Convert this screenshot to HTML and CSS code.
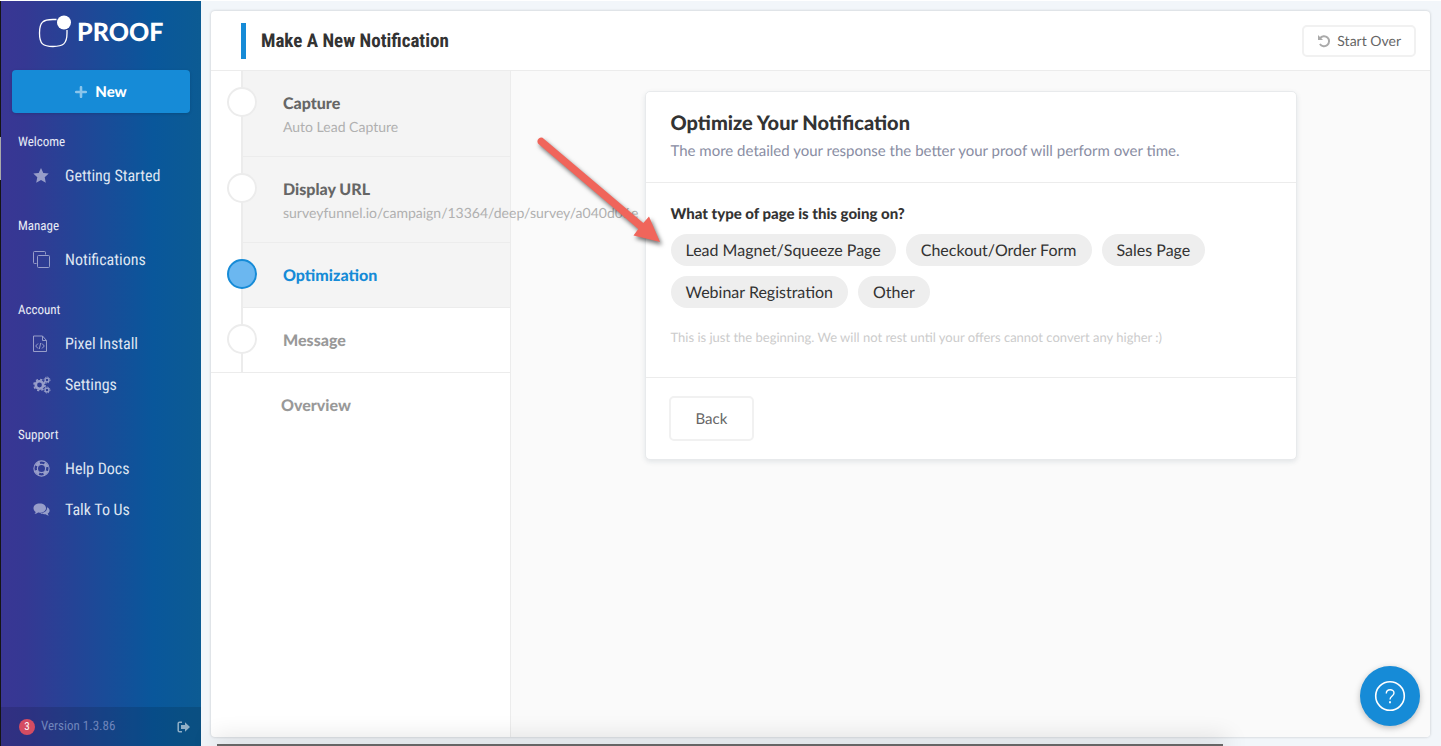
FILE: index.html
```html
<!DOCTYPE html>
<html lang="en">
<head>
<meta charset="utf-8">
<title>Proof - Make A New Notification</title>
<link rel="stylesheet" href="styles.css">
</head>
<body>
<aside class="sidebar">
  <a class="logo" href="#">
    <svg class="logo-mark" width="34" height="34" viewBox="0 0 34 34"><path d="M18.500 4.500H15C5 4.500 1.500 7 1.500 18S5 31.500 15 31.500 29 29 29 18V15" fill="none" stroke="#fff" stroke-width="1.300"/><circle cx="26" cy="7.500" r="7" fill="#fff"/></svg>
    <span>PROOF</span>
  </a>
  <button class="new-button" type="button">
    <svg width="12" height="12" viewBox="0 0 12 12"><path d="M6 1.200v9.600M1.200 6h9.600" stroke="#fff" stroke-width="2.600" stroke-linecap="round"/></svg>
    New
  </button>
  <nav class="nav">
    <h2>Welcome</h2>
    <a href="#"><svg width="18" height="18" viewBox="0 0 18 18"><path d="M8 1l2.300 5 5.400.6-4 3.700 1.100 5.500L8 13l-4.800 2.800 1.100-5.500-4-3.700 5.400-.6z" fill="#fff"/></svg>Getting Started</a>
    <h2>Manage</h2>
    <a href="#"><svg width="18" height="18" viewBox="0 0 18 18" fill="none" stroke="#fff"><path d="M3.500 12.500h-2a1 1 0 0 1-1-1v-10a1 1 0 0 1 1-1h10a1 1 0 0 1 1 1v2"/><rect x="4.500" y="4.500" width="12" height="12" rx="1"/></svg>Notifications</a>
    <h2>Account</h2>
    <a href="#"><svg width="18" height="18" viewBox="0 0 18 18" fill="none" stroke="#fff"><path d="M9.500 1H.500v15.500h13V5.500L9.500 1v4.500h4M5 8.500L2.700 11 5 13.500M9 8.500l2.300 2.500L9 13.500M7.700 8L6.300 14"/></svg>Pixel Install</a>
    <a href="#"><svg width="18" height="18" viewBox="0 0 18 18" fill="none" stroke="#fff"><circle cx="6.500" cy="9" r="3.700" stroke-width="2.600"/><circle cx="6.500" cy="9" r="5.500" stroke-width="1.600" stroke-dasharray="2.200 2.120"/><circle cx="14" cy="4" r="1.900" stroke-width="1.300"/><circle cx="14" cy="4" r="3" stroke-dasharray="1.300 1.060"/><circle cx="14" cy="14" r="1.900" stroke-width="1.300"/><circle cx="14" cy="14" r="3" stroke-dasharray="1.300 1.060"/></svg>Settings</a>
    <h2>Support</h2>
    <a href="#"><svg width="18" height="18" viewBox="0 0 18 18" fill="none" stroke="#fff"><circle cx="8.500" cy="8.500" r="7.600" stroke-width="1.100"/><circle cx="8.500" cy="8.500" r="4.100" stroke-width="1.200"/><circle cx="8.500" cy="8.500" r="5.800" stroke-width="3" stroke-dasharray="4.500 4.610" stroke-dashoffset="-2.300"/></svg>Help Docs</a>
    <a href="#"><svg width="18" height="18" viewBox="0 0 18 18" fill="#fff"><path d="M6.800 2.500C3 2.500.5 4.500.5 7.200c0 1.500.8 2.800 2.200 3.700-.2 1-.7 1.600-1.300 2.200 1.500-.1 2.700-.7 3.700-1.500 4.300.6 7.900-1.300 7.900-4.400 0-2.700-2.500-4.700-6.200-4.700z"/><path d="M14 6.200c1.700.8 2.600 1.900 2.600 3.300 0 1.300-.7 2.300-1.900 3 .2.900.7 1.500 1.200 2-1.400-.1-2.400-.6-3.300-1.300-2.200.3-4-.1-5.300-1.100 4.200 0 7-2.200 6.700-5.900z"/></svg>Talk To Us</a>
  </nav>
  <footer class="version">
    <span class="count">3</span>
    <span>Version 1.3.86</span>
    <button class="sign-out" type="button" aria-label="Sign out"><svg width="14" height="12" viewBox="0 0 14 12"><path d="M5 1.200H2.500Q1.200 1.200 1.200 2.500v7q0 1.300 1.300 1.300H5" fill="none" stroke="#fff" stroke-width="1.500"/><path d="M4 4h4V1.300L13 6l-5 4.700V8H4z" fill="#fff"/></svg></button>
  </footer>
</aside>
<main class="main">
  <section class="panel">
    <header class="panel-header">
      <h1>Make A New Notification</h1>
      <button class="outline-button start-over" type="button">
        <svg width="14" height="14" viewBox="0 0 14 14"><path d="M3 4.300A5 5 0 1 1 2.900 10" fill="none" stroke="#aaa" stroke-width="2"/><path d="M1 1v5h5z" fill="#aaa"/></svg>
        Start Over
      </button>
    </header>
    <div class="panel-body">
      <ol class="steps">
        <li class="step done"><i></i><strong>Capture</strong><span>Auto Lead Capture</span></li>
        <li class="step done"><i></i><strong>Display URL</strong><span>surveyfunnel.io/campaign/13364/deep/survey/a040d06e</span></li>
        <li class="step current"><i></i><strong>Optimization</strong></li>
        <li class="step last"><i></i><strong>Message</strong></li>
        <li class="overview"><strong>Overview</strong></li>
      </ol>
      <div class="stage">
        <article class="card">
          <header class="card-header">
            <h2>Optimize Your Notification</h2>
            <p>The more detailed your response the better your proof will perform over time.</p>
          </header>
          <div class="card-body">
            <h3>What type of page is this going on?</h3>
            <div class="chips">
              <button type="button">Lead Magnet/Squeeze Page</button>
              <button type="button">Checkout/Order Form</button>
              <button type="button">Sales Page</button>
              <button type="button">Webinar Registration</button>
              <button type="button">Other</button>
            </div>
            <p class="note">This is just the beginning. We will not rest until your offers cannot convert any higher :)</p>
          </div>
          <footer class="card-footer"><button class="outline-button back" type="button">Back</button></footer>
          <svg class="pointer" width="136" height="116" viewBox="0 0 136 116"><path d="M4 7.500Q2.500 4.500 4.800 2.500Q7.500.5 10 3L109.300 87L115 80.500L126 106L99.500 99.500L104.300 93Z" fill="#f0655b"/></svg>
        </article>
      </div>
    </div>
  </section>
</main>
<button class="help" type="button" aria-label="Help">
  <svg width="32" height="32" viewBox="0 0 32 32" fill="none" stroke="#fff"><circle cx="16" cy="16" r="14.300" stroke-width="1.600"/><path d="M12.300 13.500c0-5 7.700-5 7.700-.5 0 3-4 3-4 6.500" stroke-width="1.400"/><path d="M16 21.300v2" stroke-width="1.800"/></svg>
</button>
<div class="window-edge"></div>
</body>
</html>
```
FILE: styles.css
```css
* { box-sizing: border-box; }
body {
  margin: 0;
  height: 100vh;
  display: flex;
  overflow: hidden;
  position: relative;
  border-top: 1px solid #fff;
  background: #f2f6fa;
  font-family: Lato, "Liberation Sans", sans-serif;
  font-size: 16px;
  color: #333;
  text-rendering: geometricPrecision;
}
h1, h2, h3, p, ol { margin: 0; padding: 0; }
ol { list-style: none; }
button { font-family: inherit; cursor: pointer; text-rendering: inherit; }
a { text-decoration: none; }

.sidebar {
  width: 201px;
  flex: none;
  display: flex;
  flex-direction: column;
  border-left: 1px solid #151515;
  border-image: linear-gradient(#151515 137px, #aaa 137px, #aaa 180px, #151515 180px) 1;
  border-image-width: 0 0 0 1px;
  background: linear-gradient(90deg, #393694 0%, #353893 12%, #09579b 76%, #0c5b93 100%);
  font-family: "Roboto Condensed", "Liberation Sans Narrow", Roboto, sans-serif;
}
.logo {
  display: flex;
  align-items: center;
  gap: 5px;
  height: 61px;
  padding-left: 37px;
  color: #fff;
  font: 900 25px Lato, sans-serif;
}
.logo-mark { flex: none; }
.new-button {
  display: flex;
  align-items: center;
  justify-content: center;
  gap: 8px;
  height: 43px;
  margin: 8px 11px 0;
  border: 0;
  border-radius: 4px;
  background: #168bd7;
  color: #fff;
  font: 900 15px Lato, sans-serif;
  box-shadow: 0 1px 3px rgba(0, 0, 0, .15);
}
.new-button svg { opacity: .5; }
.nav { flex: 1; }
.nav h2 {
  padding: 20px 17px 2px;
  font-size: 13px;
  line-height: 20px;
  font-weight: 400;
  color: #e8ecf6;
}
.nav a + h2 { padding-top: 21px; }
.nav a {
  display: flex;
  align-items: center;
  gap: 14px;
  height: 41px;
  padding-left: 32px;
  color: #dfe5f1;
  font-size: 16px;
}
.nav svg { opacity: .5; }
.version {
  display: flex;
  align-items: center;
  gap: 6px;
  height: 39px;
  padding: 0 10px 0 18px;
  background: rgba(0, 0, 0, .12);
  color: #6f85bb;
  font-size: 13px;
}
.count {
  width: 16px;
  border-radius: 8px;
  background: #d54c62;
  color: #fff;
  font-size: 11px;
  line-height: 16px;
  text-align: center;
}
.sign-out {
  display: flex;
  margin-left: auto;
  padding: 0;
  border: 0;
  background: none;
  opacity: .55;
}

.main {
  flex: 1;
  min-width: 0;
  display: flex;
  padding: 10px 11px 9px 10px;
}
.panel {
  flex: 1;
  min-width: 0;
  display: flex;
  flex-direction: column;
  overflow: hidden;
  border-radius: 4px;
  background: #fff;
  box-shadow: 0 0 3px rgba(0, 0, 0, .2);
}
.panel-header {
  display: flex;
  align-items: center;
  justify-content: space-between;
  height: 60px;
  padding: 0 14px 0 30px;
  border-bottom: 1px solid #ececec;
}
h1 {
  padding-left: 15px;
  border-left: 5px solid #168bd7;
  color: #333;
  font: 700 19px/36px "Roboto Condensed", "Liberation Sans Narrow", Roboto, sans-serif;
}
.outline-button {
  border: 2px solid #f1f1f1;
  border-radius: 5px;
  background: #fff;
  color: #666;
}
.start-over {
  display: flex;
  align-items: center;
  gap: 6px;
  height: 32px;
  padding: 0 13px;
  font-size: 14px;
}
.panel-body { flex: 1; display: flex; min-height: 0; }
.steps {
  width: 300px;
  flex: none;
  border-right: 1px solid #ececec;
  white-space: nowrap;
  position: relative;
  z-index: 1;
}
.step {
  position: relative;
  margin-left: 30px;
  padding: 21px 0 19px 40px;
  border-left: 2px solid #ececec;
  border-bottom: 1px solid #ececec;
}
.step strong, .step span { display: block; }
.step strong, .overview strong { color: #999; line-height: 24px; font-weight: 900; }
.step span { color: #b0b0b0; font-size: 14px; line-height: 21px; }
.step i {
  position: absolute;
  left: -16px;
  top: 16px;
  width: 30px;
  height: 30px;
  border: 2px solid #ececec;
  border-radius: 50%;
  background: #fff;
}
.step.done, .step.current { background: #f4f4f4; background-clip: padding-box; }
.step.done strong { color: #666; }
.step.current strong { color: #168bd7; }
.step.current i { border-color: #168bd7; background: #6bb7f0; }
.step.last {
  margin-left: 0;
  padding-left: 72px;
  border-left: 0;
  background: linear-gradient(#ececec, #ececec) 30px 0 / 2px 100% no-repeat;
}
.step.last i { left: 16px; }
.overview { padding: 21px 70px; }
.stage {
  flex: 1;
  padding: 20px;
  background: #fafafa;
}
.card {
  position: relative;
  z-index: 2;
  max-width: 652px;
  margin: 0 auto;
  border: 1px solid #e8eaec;
  border-radius: 5px;
  background: #fff;
  box-shadow: 0 2px 5px rgba(60, 80, 100, .12);
}
.card-header { padding: 18px 25px; border-bottom: 1px solid #ececec; }
.card-header h2 { font-size: 20px; line-height: 26px; font-weight: 900; }
.card-header p { margin-top: 2px; color: #898da3; font-size: 15px; line-height: 26px; }
.card-body { padding: 18px 25px 27px; border-bottom: 1px solid #ececec; }
h3 { font-size: 15px; line-height: 26px; font-weight: 900; }
.chips { display: flex; flex-wrap: wrap; gap: 10px; margin-top: 7px; }
.chips button {
  height: 32px;
  padding: 0 15px;
  border: 0;
  border-radius: 16px;
  background: #eee;
  color: #333;
  font-size: 16px;
}
.note { margin-top: 16px; color: #ccc; font-size: 13px; line-height: 26px; }
.card-footer { padding: 18px 23px; }
.back { height: 45px; padding: 0 25px; font-size: 15px; }
.pointer {
  position: absolute;
  left: -112px;
  top: 44px;
  pointer-events: none;
  filter: drop-shadow(2px 3px 2px rgba(0, 0, 0, .55));
}
.help {
  position: absolute;
  right: 21px;
  bottom: 20px;
  display: flex;
  align-items: center;
  justify-content: center;
  width: 60px;
  height: 60px;
  padding: 0;
  border: 0;
  border-radius: 50%;
  background: #168bd7;
  box-shadow: 0 2px 6px rgba(0, 0, 0, .25);
  z-index: 3;
}
.window-edge {
  position: absolute;
  left: 217px;
  right: 218px;
  bottom: 0;
  height: 2px;
  background: #666;
  box-shadow: 0 0 24px 4px rgba(0, 0, 0, .2);
  z-index: 3;
}
```
